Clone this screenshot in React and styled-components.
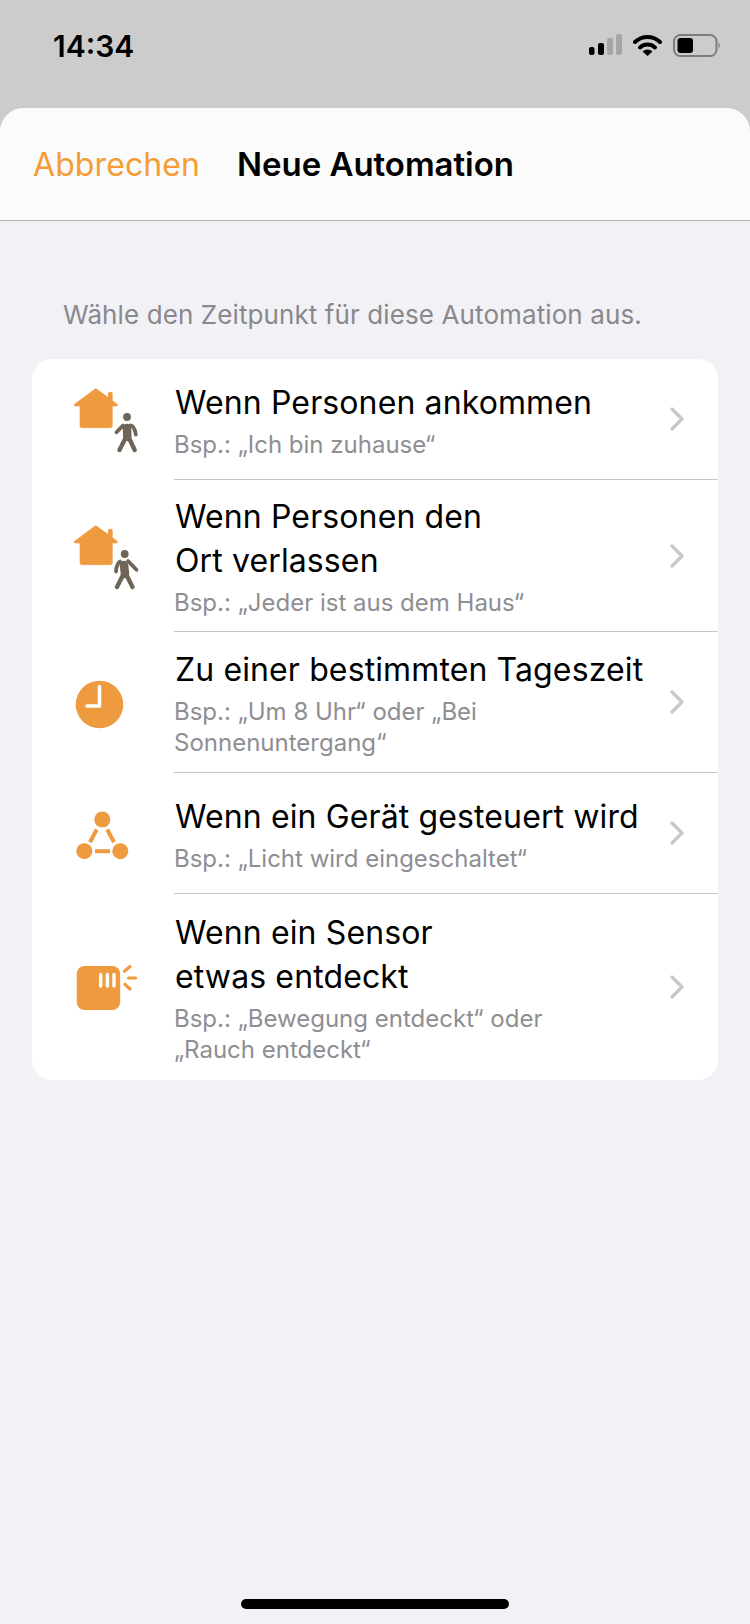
import React from 'react';
import styled, { createGlobalStyle } from 'styled-components';

const GlobalStyle = createGlobalStyle`
  html, body {
    margin: 0;
    padding: 0;
    background: #cccccc;
  }
  * {
    box-sizing: border-box;
  }
`;

const Page = styled.div`
  width: 750px;
  height: 1624px;
  display: flex;
  flex-direction: column;
  overflow: hidden;
  background: #cccccc;
  font-family: Inter, "Liberation Sans", sans-serif;
`;

const StatusBar = styled.div`
  height: 108px;
  display: flex;
  justify-content: space-between;
  padding: 28px 28px 0 53px;
`;

const Time = styled.div`
  font-size: 30px;
  line-height: 36px;
  font-weight: 600;
  color: #000;
`;

const StatusIcons = styled.div`
  display: flex;
  align-items: flex-start;
  gap: 11px;
  padding-top: 6px;
`;

const Sheet = styled.div`
  flex: 1;
  display: flex;
  flex-direction: column;
  background: #f1f1f6;
  border-radius: 24px 24px 0 0;
  overflow: hidden;
`;

const Header = styled.div`
  height: 113px;
  display: flex;
  align-items: center;
  gap: 37px;
  padding: 0 33px;
  background: #fbfbfc;
  border-bottom: 1px solid #b2b2b2;
`;

const CancelButton = styled.div`
  font-size: 32px;
  letter-spacing: 0.1px;
  color: #f49c35;
`;

const HeaderTitle = styled.div`
  font-size: 33px;
  font-weight: 600;
  letter-spacing: -0.05px;
  color: #000;
`;

const Hint = styled.div`
  margin: 78px 0 28px 63px;
  font-size: 26px;
  line-height: 32px;
  letter-spacing: 0.1px;
  color: #88888d;
`;

const Card = styled.div`
  margin: 0 32px;
  background: #fff;
  border-radius: 20px;
  overflow: hidden;
`;

const Row = styled.div`
  display: flex;
  align-items: center;
  min-height: ${(p) => p.$minHeight}px;
`;

const IconSlot = styled.div`
  width: 142px;
  flex-shrink: 0;
  padding-left: 38px;
  display: flex;
  align-items: center;
`;

const RowBody = styled.div`
  flex: 1;
  align-self: stretch;
  display: flex;
  align-items: center;
  padding-right: 34px;
  border-bottom: ${(p) => (p.$last ? 'none' : '1px solid #c6c6c8')};
`;

const RowText = styled.div`
  flex: 1;
  padding: 14px 0 12px;
`;

const RowTitle = styled.div`
  padding-left: 1px;
  font-size: 32px;
  line-height: 44px;
  letter-spacing: 0.12px;
  color: #000;
  white-space: pre-line;
`;

const RowSub = styled.div`
  margin-top: 4px;
  font-size: 24px;
  line-height: 31px;
  color: #8e8e93;
  white-space: pre-line;
`;

const Chevron = styled.svg`
  width: 14px;
  height: 24px;
  flex-shrink: 0;
`;

const Glyph = styled.svg`
  display: block;
  width: ${(p) => p.$w}px;
  height: ${(p) => p.$h}px;
`;

const Spacer = styled.div`
  flex: 1;
`;

const HomeBar = styled.div`
  width: 268px;
  height: 10px;
  margin: 0 auto 15px;
  border-radius: 5px;
  background: #000;
`;

const ORANGE = '#ee9b40';
const WALKER = '#6f6557';

const SignalIcon = () => (
  <Glyph $w={33} $h={21} viewBox="0 0 33 21">
    <rect x="0" y="13" width="5.5" height="8" rx="2" fill="#000" />
    <rect x="9" y="9" width="6" height="12" rx="2" fill="#000" />
    <rect x="18" y="4" width="6" height="17" rx="2" fill="#a5a5a5" />
    <rect x="27" y="0" width="6" height="21" rx="2" fill="#a5a5a5" />
  </Glyph>
);

const WifiIcon = () => (
  <Glyph $w={29} $h={22} viewBox="0 0 29 22">
    <path d="M2 8 A18 18 0 0 1 27 8" fill="none" stroke="#000" strokeWidth="4" strokeLinecap="round" />
    <path d="M7 13.5 A11 11 0 0 1 22 13.5" fill="none" stroke="#000" strokeWidth="4" strokeLinecap="round" />
    <path d="M14.5 22 L9.5 17.5 A7 7 0 0 1 19.5 17.5 Z" fill="#000" />
  </Glyph>
);

const BatteryIcon = () => (
  <Glyph $w={49} $h={23} viewBox="0 0 49 23">
    <rect x="1" y="1" width="42.5" height="21" rx="6.5" fill="none" stroke="#7d7d7d" strokeWidth="2" />
    <rect x="4.5" y="4" width="15.5" height="15" rx="3" fill="#000" />
    <path d="M45.5 8 A6 6 0 0 1 45.5 15 Z" fill="#7d7d7d" />
  </Glyph>
);

const House = ({ dy }) => (
  <path
    transform={`translate(0 ${dy})`}
    d="M25.7 4.5 L38.3 13.6 V9.3 Q38.3 8.3 39.3 8.3 H41.3 Q42.3 8.3 42.3 9.3 V16.6 L47 20.2 Q48.2 22 46.5 22 H42.3 V41.7 Q42.3 43.7 40.3 43.7 H12 Q10 43.7 10 41.7 V22 H5.2 Q3.4 22 4.6 20.2 Z"
    fill={ORANGE}
    stroke={ORANGE}
    strokeWidth="0.6"
    strokeLinejoin="round"
  />
);

const ArriveIcon = () => (
  <Glyph $w={72} $h={72} viewBox="0 0 72 72">
    <House dy={0} />
    <g fill="none" stroke={WALKER} strokeLinecap="round" strokeLinejoin="round">
      <path d="M57 44 L57.3 53" strokeWidth="8.5" />
      <path d="M55.5 54 L49.5 66 M59 54 L64.7 66" strokeWidth="4.4" />
      <path d="M53 41.5 L46.5 48.3 M60.5 41.5 Q64.5 42 65.8 50.5" strokeWidth="3.8" />
    </g>
    <circle cx="57" cy="33" r="3.9" fill={WALKER} />
  </Glyph>
);

const LeaveIcon = () => (
  <Glyph $w={72} $h={72} viewBox="0 0 72 72">
    <House dy={1} />
    <g fill="none" stroke={WALKER} strokeLinecap="round" strokeLinejoin="round">
      <path d="M54 45 L55 54" strokeWidth="8.5" />
      <path d="M53 55 L47 67 M56.5 55 L62.5 67" strokeWidth="4.4" />
      <path d="M50 41.5 Q46.5 44 46 51.5 M58 41 L66.5 49.8" strokeWidth="3.8" />
    </g>
    <circle cx="54.7" cy="34" r="3.9" fill={WALKER} />
  </Glyph>
);

const ClockIcon = () => (
  <Glyph $w={72} $h={72} viewBox="0 0 72 72">
    <circle cx="29.5" cy="37.5" r="23.8" fill={ORANGE} />
    <path d="M29.5 19.5 V39 H17" fill="none" stroke="#fff" strokeWidth="3.6" strokeLinecap="round" strokeLinejoin="round" />
  </Glyph>
);

const DeviceIcon = () => (
  <Glyph $w={72} $h={72} viewBox="0 0 72 72">
    <circle cx="32.3" cy="21.5" r="8" fill={ORANGE} />
    <circle cx="14.3" cy="53.2" r="8" fill={ORANGE} />
    <circle cx="50.3" cy="53.2" r="8" fill={ORANGE} />
    <path d="M20 44.2 L26.7 31.5 M44 44.2 L37.3 31.5 M25 53.2 H40" fill="none" stroke={ORANGE} strokeWidth="4" />
  </Glyph>
);

const SensorIcon = () => (
  <Glyph $w={72} $h={72} viewBox="0 0 72 72">
    <rect x="6.7" y="15" width="43.5" height="44" rx="8" fill={ORANGE} />
    <path d="M30.7 23.5 V35 M37.4 23.5 V35 M44 23.5 V35" stroke="#fff" strokeWidth="3.4" strokeLinecap="round" />
    <path d="M54.5 20.3 L60 15.5 M58.5 27 H65.5 M55 33.3 L60 38" fill="none" stroke={ORANGE} strokeWidth="3.2" strokeLinecap="round" />
  </Glyph>
);

const rows = [
  { Icon: ArriveIcon, title: 'Wenn Personen ankommen', sub: 'Bsp.: „Ich bin zuhause“', minHeight: 121 },
  { Icon: LeaveIcon, title: 'Wenn Personen den\nOrt verlassen', sub: 'Bsp.: „Jeder ist aus dem Haus“', minHeight: 152 },
  { Icon: ClockIcon, title: 'Zu einer bestimmten Tageszeit', sub: 'Bsp.: „Um 8 Uhr“ oder „Bei\nSonnenuntergang“', minHeight: 141 },
  { Icon: DeviceIcon, title: 'Wenn ein Gerät gesteuert wird', sub: 'Bsp.: „Licht wird eingeschaltet“', minHeight: 121 },
  { Icon: SensorIcon, title: 'Wenn ein Sensor\netwas entdeckt', sub: 'Bsp.: „Bewegung entdeckt“ oder\n„Rauch entdeckt“', minHeight: 186 },
];

export default function App() {
  return (
    <Page>
      <GlobalStyle />
      <StatusBar>
        <Time>14:34</Time>
        <StatusIcons>
          <SignalIcon />
          <WifiIcon />
          <BatteryIcon />
        </StatusIcons>
      </StatusBar>
      <Sheet>
        <Header>
          <CancelButton>Abbrechen</CancelButton>
          <HeaderTitle>Neue Automation</HeaderTitle>
        </Header>
        <Hint>Wähle den Zeitpunkt für diese Automation aus.</Hint>
        <Card>
          {rows.map(({ Icon, title, sub, minHeight }, i) => (
            <Row key={title} $minHeight={minHeight}>
              <IconSlot>
                <Icon />
              </IconSlot>
              <RowBody $last={i === rows.length - 1}>
                <RowText>
                  <RowTitle>{title}</RowTitle>
                  <RowSub>{sub}</RowSub>
                </RowText>
                <Chevron viewBox="0 0 14 24">
                  <path d="M2 2 L12 12 L2 22" fill="none" stroke="#c7c7cc" strokeWidth="3.2" strokeLinecap="round" strokeLinejoin="round" />
                </Chevron>
              </RowBody>
            </Row>
          ))}
        </Card>
        <Spacer />
        <HomeBar />
      </Sheet>
    </Page>
  );
}
